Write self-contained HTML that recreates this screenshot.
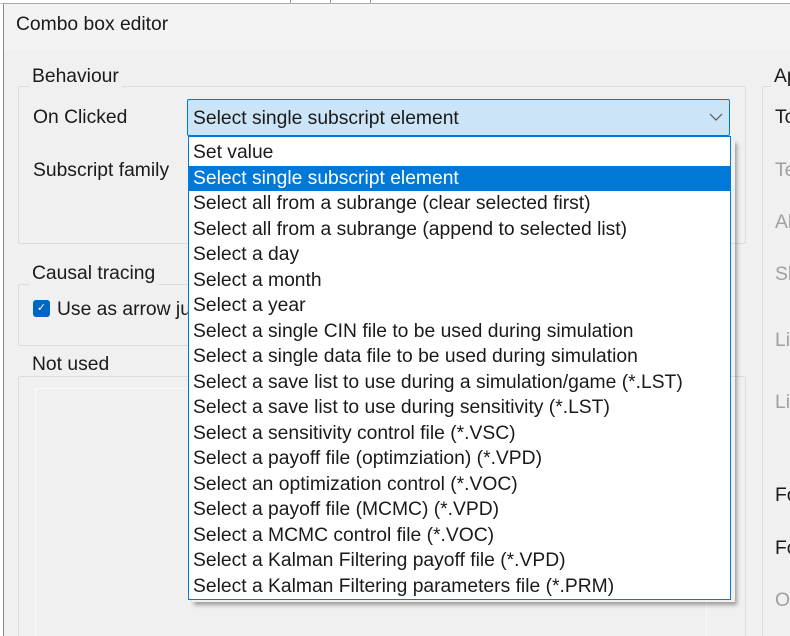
<!DOCTYPE html>
<html><head><style>
html,body{margin:0;width:790px;height:636px;overflow:hidden}
body{background:#fff;position:relative;font-family:"Liberation Sans",sans-serif;font-size:19.3px;color:#1a1a1a}
.a{position:absolute}
.grp{position:absolute;border:1px solid #dcdcdc;border-radius:2px}
.lg{position:absolute;background:#f0f0f0;padding:0 3px}
.g{color:#a0a0a0}
#list div{height:25.5px;line-height:25.5px;padding-left:4px;white-space:nowrap}
</style></head><body>
<div class="a" style="left:0;top:0;width:790px;height:3px;background:#fff;border-bottom:1px solid #ccc"></div>
<div class="a" style="left:290px;top:0;width:1px;height:4px;background:#999"></div>
<div class="a" style="left:330px;top:0;width:1px;height:4px;background:#999"></div>
<div class="a" style="left:370px;top:0;width:1px;height:4px;background:#999"></div>
<div class="a" style="left:3px;top:3px;width:787px;height:633px;background:#f0f0f0;border-left:1px solid #888;border-top:1px solid #aaa"></div>
<div class="a" style="left:4px;top:4px;width:786px;height:46px;background:#f3f3f3"></div>
<div class="a" style="left:16px;top:14px">Combo box editor</div>

<div class="grp" style="left:18px;top:86px;width:726px;height:156px"></div>
<div class="lg" style="left:29px;top:66px">Behaviour</div>
<div class="a" style="left:33px;top:107px">On Clicked</div>
<div class="a" style="left:33px;top:160px">Subscript family</div>

<div class="grp" style="left:18px;top:284px;width:270px;height:60px"></div>
<div class="lg" style="left:29px;top:263px">Causal tracing</div>
<div class="a" style="left:33px;top:300px;width:17px;height:17px;background:#0067c0;border-radius:3px;color:#fff;font-size:11px;text-align:center;line-height:17px">✓</div>
<div class="a" style="left:57px;top:299px">Use as arrow ju</div>

<div class="grp" style="left:18px;top:376px;width:726px;height:270px"></div>
<div class="lg" style="left:29px;top:354px">Not used</div>
<div class="a" style="left:35px;top:388px;width:670px;height:260px;border:1px solid #fafafa;background:#f0f0f0"></div>

<div class="grp" style="left:762px;top:86px;width:40px;height:560px"></div>
<div class="lg" style="left:771px;top:66px">Ap</div>
<div class="a" style="left:775px;top:107px">To</div>
<div class="a g" style="left:775px;top:160px">Te</div>
<div class="a g" style="left:775px;top:212px">Al</div>
<div class="a g" style="left:775px;top:264px">Sh</div>
<div class="a g" style="left:775px;top:330px">Li</div>
<div class="a g" style="left:775px;top:392px">Li</div>
<div class="a" style="left:775px;top:485px">Fo</div>
<div class="a" style="left:775px;top:538px">Fo</div>
<div class="a g" style="left:775px;top:590px">O</div>

<div class="a" style="left:187px;top:99px;width:541px;height:35px;background:#cce4f7;border:1px solid #0078d7;border-radius:2px"></div>
<div class="a" style="left:193px;top:108px">Select single subscript element</div>
<svg class="a" style="left:709px;top:112px" width="14" height="10"><path d="M1 2 L7 8 L13 2" fill="none" stroke="#555" stroke-width="1.2"/></svg>

<div class="a" style="left:192px;top:140px;width:543px;height:462px;box-shadow:2px 3px 4px rgba(0,0,0,.35)"></div>
<div id="list" class="a" style="left:188px;top:136px;width:541px;height:459px;background:#fff;border:1px solid #0078d7;padding-top:3px;box-sizing:content-box">
<div>Set value</div>
<div style="background:#0078d7;color:#fff">Select single subscript element</div>
<div>Select all from a subrange (clear selected first)</div>
<div>Select all from a subrange (append to selected list)</div>
<div>Select a day</div>
<div>Select a month</div>
<div>Select a year</div>
<div>Select a single CIN file to be used during simulation</div>
<div>Select a single data file to be used during simulation</div>
<div>Select a save list to use during a simulation/game (*.LST)</div>
<div>Select a save list to use during sensitivity (*.LST)</div>
<div>Select a sensitivity control file (*.VSC)</div>
<div>Select a payoff file (optimziation) (*.VPD)</div>
<div>Select an optimization control (*.VOC)</div>
<div>Select a payoff file (MCMC) (*.VPD)</div>
<div>Select a MCMC control file (*.VOC)</div>
<div>Select a Kalman Filtering payoff file (*.VPD)</div>
<div>Select a Kalman Filtering parameters file (*.PRM)</div>
</div>
</body></html>
